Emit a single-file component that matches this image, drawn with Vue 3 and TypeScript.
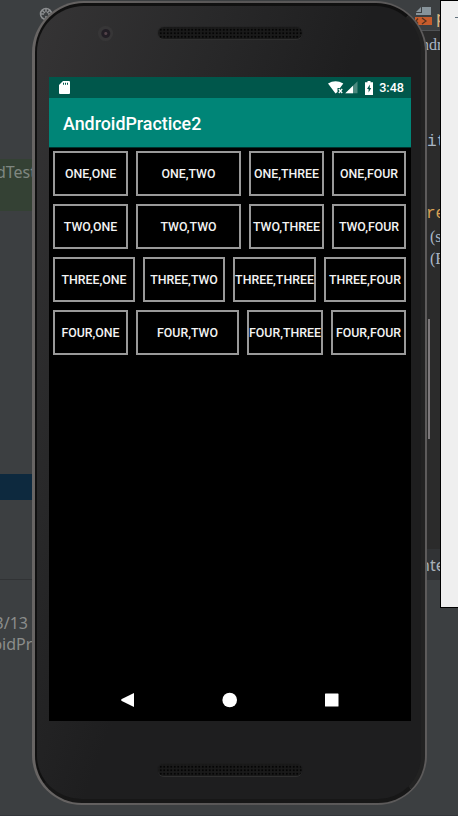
<script setup lang="ts">
interface Cell {
  label: string
  width: number
}

function row(first: string, widths: number[]): Cell[] {
  return ['ONE', 'TWO', 'THREE', 'FOUR'].map((name, i) => ({
    label: `${first},${name}`,
    width: widths[i],
  }))
}

const rows: Cell[][] = [
  row('ONE', [75, 105, 75, 74]),
  row('TWO', [75, 105, 75, 74]),
  row('THREE', [82, 82, 83, 82]),
  row('FOUR', [75, 103, 76, 75]),
]
</script>

<template>
  <main class="desktop">
    <section class="ide-left">
      <svg class="gear" viewBox="0 0 14 14">
        <circle cx="7" cy="7" r="5.5" />
        <path d="M7 1v4M7 9v4M1 7h4M9 7h4M3 3l3 3M11 3L8 6" />
      </svg>
      <div class="tree-row"><span>AndroidTest</span></div>
      <div class="selected-row"></div>
      <div class="rule"></div>
      <div class="log"><span>2019/3/13</span><span>AndroidPra</span></div>
    </section>

    <section class="editor">
      <div class="tab-bar">
        <svg class="file-icon" viewBox="0 0 17 19">
          <path d="M7 0h9v8H1V6h6z" fill="#87939a" />
          <path d="M1 5l5-5v5z" fill="#87939a" />
          <path d="M0 10h17v8H0z" fill="#c75c2c" />
          <path d="M3 11.500l-2 2.500 2 2.500M7 11l4 3-4 3" fill="none" stroke="#56321f" stroke-width="1.300" />
        </svg>
        <span class="tab-name">p</span>
      </div>
      <div class="code">
        <span class="l1">ndroid</span>
        <span class="l2">ity</span>
        <span class="l3">reate</span>
        <span class="l4">(sav</span>
        <span class="l5">(R.l</span>
      </div>
      <div class="scroll-mark"></div>
      <div class="crumb">ntent</div>
    </section>

    <section class="phone">
      <div class="body">
        <header class="bezel top">
          <i class="camera"></i>
          <i class="speaker"></i>
        </header>

        <div class="screen">
          <div class="status">
            <svg class="sd" viewBox="0 0 11 13">
              <path d="M4 0h6q1 0 1 1v11q0 1-1 1H1q-1 0-1-1V4z" fill="#fff" />
              <path d="M4 1.700h1v2H4zM6 1.700h1v2H6zM8 1.700h1v2H8z" fill="#00574b" />
            </svg>
            <div class="status-right">
              <svg class="signals" viewBox="0 0 30 13">
                <path d="M0 2.500Q7.500-2 15.300 2.500L12 7H9.500v4L7.500 12.500z" fill="#fff" />
                <path d="M10.800 8l3.400 4M14.200 8l-3.400 4" stroke="#fff" stroke-width="1.200" />
                <path d="M29.500.300v11.900H17.300z" fill="#4d897f" />
                <path d="M25 4.800v7.400h-7.700z" fill="#fff" />
              </svg>
              <svg class="battery" viewBox="0 0 8 14">
                <path d="M2.500 0h3v1.300H8V14H0V1.300h2.500z" fill="#fff" />
                <path d="M4.900 3.500L2 8h1.600v3.500L6.200 7H4.700z" fill="#00574b" />
              </svg>
              <span class="clock">3:48</span>
            </div>
          </div>
          <h1 class="app-bar">AndroidPractice2</h1>
          <div class="table">
            <div v-for="(cells, r) in rows" :key="r" class="row">
              <button
                v-for="cell in cells"
                :key="cell.label"
                class="cell"
                :style="{ width: cell.width + 'px' }"
              >{{ cell.label }}</button>
            </div>
          </div>
          <nav class="nav">
            <svg viewBox="0 0 16 16"><path d="M14 1v14L1.300 8.700V7.300z" /></svg>
            <svg viewBox="0 0 16 16"><circle cx="7.700" cy="8" r="7.300" /></svg>
            <svg viewBox="0 0 16 16"><rect x="1" y="1.500" width="13.500" height="13" rx=".6" /></svg>
          </nav>
        </div>

        <footer class="bezel bottom"><i class="speaker"></i></footer>
      </div>
    </section>

    <aside class="emulator-tools"><i class="minimize"></i></aside>
  </main>
</template>

<style>
body {
  margin: 0;
  overflow: hidden;
}
</style>

<style scoped>
.desktop {
  position: relative;
  width: 458px;
  height: 816px;
  overflow: hidden;
  box-sizing: border-box;
  background: #3c3f41;
  border-bottom: 1px solid #33363a;
  font-family: Roboto, "Liberation Sans", sans-serif;
}
.ide-left {
  position: absolute;
  inset: 0 auto 0 0;
  width: 60px;
  color: #8b8d8c;
  font-family: "Noto Sans", sans-serif;
  font-size: 16px;
}
.gear {
  position: absolute;
  left: 39px;
  top: 7px;
  width: 14px;
  height: 14px;
  fill: none;
  stroke: #8c8e90;
  stroke-width: 1.5;
}
.tree-row {
  display: flex;
  justify-content: flex-end;
  align-items: flex-start;
  width: 36px;
  height: 52px;
  margin-top: 159px;
  background: #344134;
  line-height: 27px;
  color: #7f8781;
}
.selected-row {
  height: 26px;
  margin-top: 263px;
  background: #0d293e;
}
.rule {
  height: 1px;
  margin-top: 79px;
  background: #313335;
}
.log {
  display: flex;
  flex-direction: column;
  align-items: flex-end;
  width: 41px;
  margin-top: 33px;
  line-height: 21px;
  white-space: nowrap;
}
.log span:first-child {
  margin-right: 13px;
}
.editor {
  position: absolute;
  left: 401px;
  top: 0;
  width: 40px;
  height: 580px;
  background: #2b2b2b;
}
.tab-bar {
  display: flex;
  height: 30px;
  background: #3c3f41;
  border-bottom: 1px solid #505254;
}
.file-icon {
  flex: none;
  width: 17px;
  height: 19px;
  margin: 7px 0 0 14px;
}
.tab-name {
  width: 5px;
  margin-left: 4px;
  overflow: hidden;
  color: #d8b681;
  font: 17px/34px "Noto Sans", sans-serif;
}
.code {
  display: grid;
  grid-template-rows: 23px 94px 72px 23px 22px;
  padding-top: 4px;
  overflow: hidden;
  color: #a9b7c6;
  font: 16px/20px "Liberation Serif", serif;
}
.l1 {
  margin-left: 20px;
}
.l2,
.l3,
.l4,
.l5 {
  align-self: end;
}
.l2,
.l3 {
  margin-left: 26px;
  font-family: "Liberation Mono", monospace;
}
.l3 {
  margin-left: 25px;
  color: #d8a154;
}
.l4,
.l5 {
  margin-left: 29px;
}
.scroll-mark {
  width: 2px;
  height: 120px;
  margin: 50px 0 0 27px;
  background: #7c787a;
}
.crumb {
  box-sizing: border-box;
  height: 31px;
  margin-top: 110px;
  padding-left: 19px;
  overflow: hidden;
  background: #313335;
  color: #a9b1b8;
  font: 16px/33px "Noto Sans", sans-serif;
}
.phone {
  position: absolute;
  left: 32px;
  top: 1px;
  width: 395px;
  height: 804px;
  box-sizing: border-box;
  padding: 2px 2px 2px 3px;
  border-radius: 52px 52px 50px 50px;
  background: linear-gradient(90deg, #686564, #585656 50%, #5d5b5b);
}
.body {
  display: flex;
  flex-direction: column;
  height: 100%;
  box-sizing: border-box;
  border: 2px solid #101010;
  border-top-width: 3px;
  border-right: 4px solid #222;
  border-bottom: 4px solid #171717;
  border-radius: 49px 49px 47px 47px;
  background: linear-gradient(110deg, #353435 0, #282829 28%, #1e1e1f 50%);
}
.bezel {
  position: relative;
  display: flex;
  justify-content: center;
}
.top {
  height: 71px;
}
.camera {
  position: absolute;
  left: 61px;
  top: 20px;
  width: 15px;
  height: 15px;
  border-radius: 50%;
  background: radial-gradient(circle at 52% 50%, #54434a 0 1px, #221e25 2px 4px, #373637 5px);
}
.speaker {
  width: 144px;
  height: 12px;
  margin: 21px 0 0 2px;
  border-radius: 6px;
  background: radial-gradient(circle, #050505 0 1px, #1a1a1a 1.4px) 1px 1px / 3.5px 3.5px;
  box-shadow: 0 0 1px #101010, 0 1px 0 #343434;
}
.screen {
  display: flex;
  flex-direction: column;
  width: 362px;
  height: 644px;
  margin-left: 12px;
  background: #000;
}
.status {
  display: flex;
  flex: none;
  align-items: center;
  justify-content: space-between;
  height: 21px;
  padding: 0 7px 0 10px;
  background: #00574b;
}
.sd {
  width: 11px;
  height: 13px;
}
.status-right {
  display: flex;
  align-items: center;
}
.signals {
  width: 30px;
  height: 13px;
}
.battery {
  width: 8px;
  height: 14px;
  margin-left: 7px;
}
.clock {
  margin-left: 6px;
  color: #fff;
  font-size: 12.6px;
  font-weight: 500;
  line-height: 22px;
}
.app-bar {
  flex: none;
  height: 49px;
  margin: 0;
  padding-left: 14px;
  background: #008577;
  color: #fff;
  font-size: 17.85px;
  font-weight: 500;
  line-height: 51px;
  box-shadow: 0 1px 0 #00332e;
}
.table {
  display: flex;
  flex-direction: column;
  gap: 8px;
  padding: 4px;
}
.row {
  display: flex;
  gap: 8px;
}
.cell {
  display: flex;
  flex: none;
  align-items: center;
  justify-content: center;
  height: 45px;
  box-sizing: border-box;
  padding: 0;
  border: 2px solid #999;
  background: #000;
  color: #f3f3f3;
  font: 500 12.35px Roboto, sans-serif;
  white-space: nowrap;
}
.nav {
  display: flex;
  justify-content: space-between;
  align-items: center;
  height: 43px;
  margin-top: auto;
  padding: 0 71px;
}
.nav svg {
  width: 16px;
  height: 16px;
  fill: #fff;
}
.bottom .speaker {
  margin-top: 43px;
}
.emulator-tools {
  position: absolute;
  left: 440px;
  top: 0;
  width: 30px;
  height: 608px;
  box-sizing: border-box;
  border: 1px solid #000;
  background: #efefef;
}
.minimize {
  display: block;
  width: 12px;
  height: 1px;
  margin: 16px 0 0 14px;
  background: #61717c;
}
</style>
